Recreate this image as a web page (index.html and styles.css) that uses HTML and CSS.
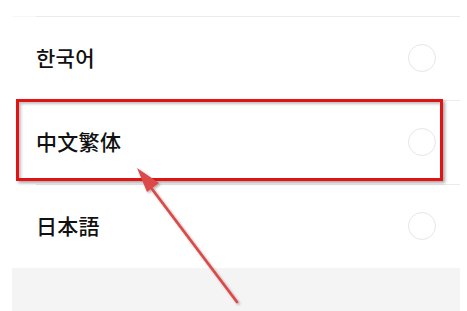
FILE: index.html
```html
<!DOCTYPE html>
<html lang="zh">
<head>
<meta charset="utf-8">
<link rel="stylesheet" href="styles.css">
</head>
<body>
<div class="page">
  <div class="list">
    <div class="row first"><span class="label" lang="ko">한국어</span><span class="radio"></span></div>
    <div class="row"><span class="label" lang="zh-TW">中文繁体</span><span class="radio"></span></div>
    <div class="row"><span class="label" lang="ja">日本語</span><span class="radio"></span></div>
  </div>
  <div class="footer"></div>
  <div class="highlight"></div>
  <svg class="arrow" width="467" height="311" viewBox="0 0 467 311">
    <defs>
      <filter id="sh" x="-20%" y="-20%" width="140%" height="140%">
        <feDropShadow dx="1.5" dy="1.5" stdDeviation="1.2" flood-color="#000" flood-opacity="0.3"/>
      </filter>
    </defs>
    <g filter="url(#sh)">
      <line x1="237" y1="302" x2="146" y2="181" stroke="#dc4a4a" stroke-width="2.8" stroke-linecap="round"/>
      <polygon points="137,168 159,183 147,192" fill="#dc4a4a"/>
    </g>
  </svg>
</div>
</body>
</html>
```

FILE: styles.css
```css
html, body {
  margin: 0;
  padding: 0;
  background: #ffffff;
}
.page {
  position: relative;
  width: 467px;
  height: 311px;
  overflow: hidden;
  padding: 16px 7px 0 12px;
  box-sizing: border-box;
  font-family: "Noto Sans CJK SC", "Noto Sans CJK TC", "Noto Sans CJK JP", "Noto Sans CJK KR", sans-serif;
}
.list {
  display: flex;
  flex-direction: column;
}
.row {
  position: relative;
  height: 83px;
  border-top: 1px solid transparent;
  display: flex;
  align-items: center;
  justify-content: space-between;
  padding: 0 24px;
}
.row::before {
  content: "";
  position: absolute;
  top: -1px;
  left: 24px;
  right: 0;
  height: 1px;
  background: #ebebeb;
}
.row.first {
  border-top-color: #f7f7f7;
}
.label {
  font-size: 21px;
  font-weight: 500;
  color: #111111;
  letter-spacing: 0.3px;
  line-height: 1;
  padding-bottom: 3px;
}
.label:lang(ko) { font-family: "Noto Sans CJK KR", sans-serif; }
.label:lang(ja) { font-family: "Noto Sans CJK JP", sans-serif; }
.label:lang(zh-TW) { font-family: "Noto Sans CJK SC", sans-serif; }
.radio {
  width: 26px;
  height: 26px;
  border: 1.5px solid #e6e6e6;
  border-radius: 50%;
  margin-bottom: 2px;
}
.footer {
  height: 45px;
  background: #f4f4f4;
}
.highlight {
  position: absolute;
  left: 16px;
  top: 99px;
  width: 427px;
  height: 82px;
  box-sizing: border-box;
  border: 3px solid #e01414;
  box-shadow: 2px 2px 3px rgba(0,0,0,0.35), inset 2px 2px 3px rgba(0,0,0,0.25);
}
.arrow {
  position: absolute;
  left: 0;
  top: 0;
}
```
